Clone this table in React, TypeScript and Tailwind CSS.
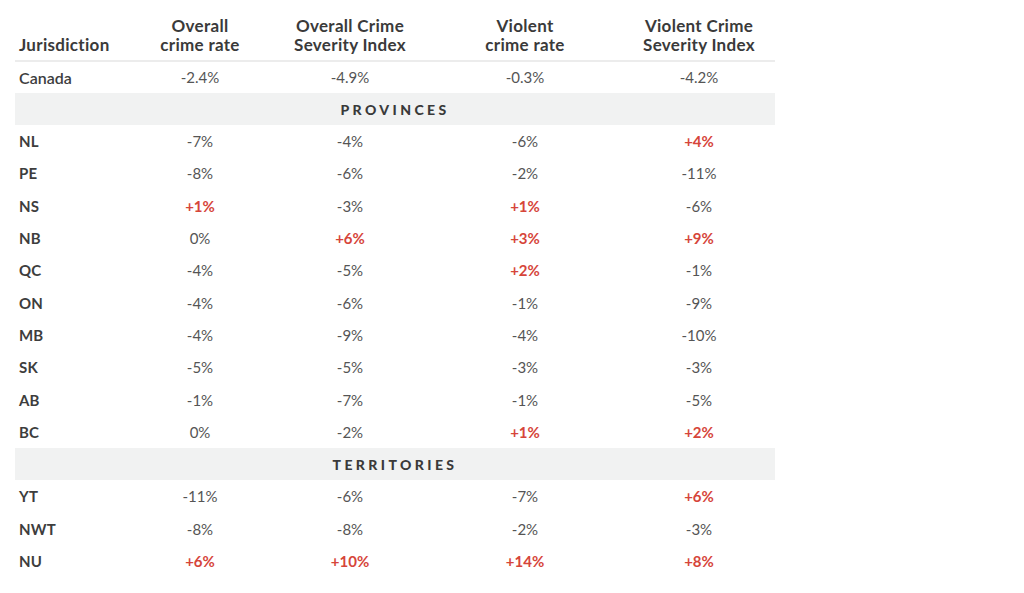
type Row = { name: string; values: string[] };

const canada: Row = { name: 'Canada', values: ['-2.4%', '-4.9%', '-0.3%', '-4.2%'] };

const provinces: Row[] = [
  { name: 'NL', values: ['-7%', '-4%', '-6%', '+4%'] },
  { name: 'PE', values: ['-8%', '-6%', '-2%', '-11%'] },
  { name: 'NS', values: ['+1%', '-3%', '+1%', '-6%'] },
  { name: 'NB', values: ['0%', '+6%', '+3%', '+9%'] },
  { name: 'QC', values: ['-4%', '-5%', '+2%', '-1%'] },
  { name: 'ON', values: ['-4%', '-6%', '-1%', '-9%'] },
  { name: 'MB', values: ['-4%', '-9%', '-4%', '-10%'] },
  { name: 'SK', values: ['-5%', '-5%', '-3%', '-3%'] },
  { name: 'AB', values: ['-1%', '-7%', '-1%', '-5%'] },
  { name: 'BC', values: ['0%', '-2%', '+1%', '+2%'] },
];

const territories: Row[] = [
  { name: 'YT', values: ['-11%', '-6%', '-7%', '+6%'] },
  { name: 'NWT', values: ['-8%', '-8%', '-2%', '-3%'] },
  { name: 'NU', values: ['+6%', '+10%', '+14%', '+8%'] },
];

const cols = 'grid grid-cols-[112px_146px_154px_196px_152px]';

function DataRow({ row, bold, height }: { row: Row; bold: boolean; height: string }) {
  return (
    <div className={`${cols} items-center ${height}`}>
      <div
        className={
          bold
            ? 'pl-1 text-[15px] font-bold tracking-[0.2px] text-[#3d3d3d]'
            : 'pl-1 text-[16px] leading-[20px] font-semibold text-[#3d3d3d]'
        }
      >
        {row.name}
      </div>
      {row.values.map((v, i) => (
        <div
          key={i}
          className={
            v.startsWith('+')
              ? 'text-center text-[15px] font-bold text-[#d6453a]'
              : 'text-center text-[15px] text-[#555555]'
          }
        >
          {v}
        </div>
      ))}
    </div>
  );
}

function Band({ label }: { label: string }) {
  return (
    <div className="flex h-[32px] items-center justify-center bg-[#f1f2f2] text-[14px] font-black tracking-[3.4px] text-[#3a3a3a]">
      {label}
    </div>
  );
}

export default function App() {
  return (
    <div className="h-[593px] w-[1024px] bg-white" style={{ fontFamily: 'Lato, "Noto Sans", sans-serif' }}>
      <div className="ml-[15px] w-[760px] pt-[16px]">
        <div className={`${cols} items-end border-b-2 border-[#ececec] pb-[6px] text-[17px] leading-[19px] font-bold tracking-[0.3px] text-[#3a3a3a]`}>
          <div className="pl-1">Jurisdiction</div>
          <div className="text-center">
            Overall
            <br />
            crime rate
          </div>
          <div className="text-center">
            Overall Crime
            <br />
            Severity Index
          </div>
          <div className="text-center">
            Violent
            <br />
            crime rate
          </div>
          <div className="text-center">
            Violent Crime
            <br />
            Severity Index
          </div>
        </div>
        <DataRow row={canada} bold={false} height="h-[31px]" />
        <Band label="PROVINCES" />
        {provinces.map((r) => (
          <DataRow key={r.name} row={r} bold height="h-[32.33px]" />
        ))}
        <Band label="TERRITORIES" />
        {territories.map((r) => (
          <DataRow key={r.name} row={r} bold height="h-[32.4px]" />
        ))}
      </div>
    </div>
  );
}
